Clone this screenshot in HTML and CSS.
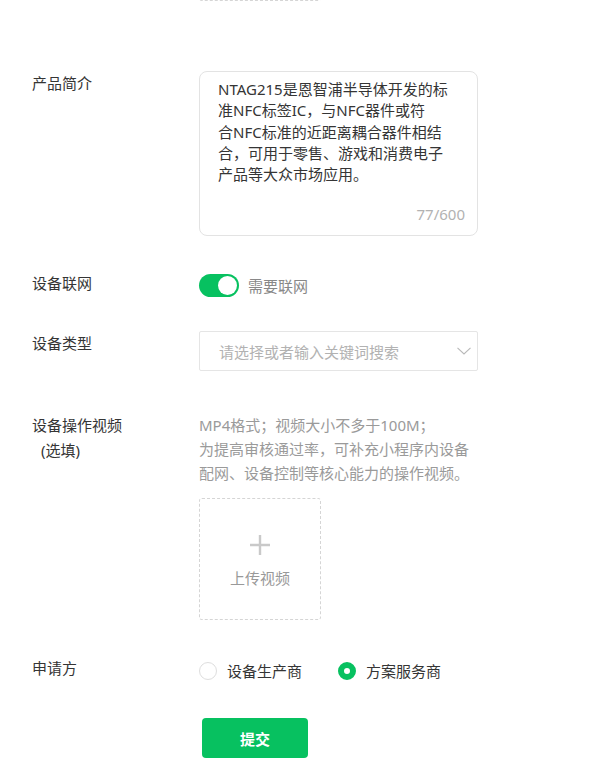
FILE: index.html
```html
<!DOCTYPE html>
<html lang="zh-CN">
<head>
<meta charset="utf-8">
<link rel="stylesheet" href="styles.css">
</head>
<body>
<div class="form">
  <div class="row row-prev">
    <div class="label"></div>
    <div class="content"><div class="upload upload-prev"></div></div>
  </div>

  <div class="row row-intro">
    <div class="label">产品简介</div>
    <div class="content">
      <div class="textarea">
        <div class="ta-text">NTAG215是恩智浦半导体开发的标<br>准NFC标签IC，与NFC器件或符<br>合NFC标准的近距离耦合器件相结<br>合，可用于零售、游戏和消费电子<br>产品等大众市场应用。</div>
        <div class="counter">77/600</div>
      </div>
    </div>
  </div>

  <div class="row row-net">
    <div class="label">设备联网</div>
    <div class="content switch-line">
      <span class="switch"><span class="knob"></span></span>
      <span class="switch-text">需要联网</span>
    </div>
  </div>

  <div class="row row-type">
    <div class="label">设备类型</div>
    <div class="content">
      <div class="select">
        <span class="placeholder">请选择或者输入关键词搜索</span>
        <svg class="chevron" width="14" height="8" viewBox="0 0 14 8"><path d="M0.5 0.8 L7 7 L13.5 0.8" fill="none" stroke="#b8b8b8" stroke-width="1.1"/></svg>
      </div>
    </div>
  </div>

  <div class="row row-video">
    <div class="label label-video">设备操作视频<br><span class="optional">(选填)</span></div>
    <div class="content">
      <div class="help">MP4格式；视频大小不多于100M；<br>为提高审核通过率，可补充小程序内设备<br>配网、设备控制等核心能力的操作视频。</div>
      <div class="upload">
        <svg class="plus" width="22" height="22" viewBox="0 0 22 22"><path d="M11 1 V21 M1 11 H21" stroke="#c9c9c9" stroke-width="2.4" fill="none"/></svg>
        <span class="upload-text">上传视频</span>
      </div>
    </div>
  </div>

  <div class="row row-applicant">
    <div class="label">申请方</div>
    <div class="content radios">
      <span class="radio-item"><span class="radio"></span><span class="radio-text">设备生产商</span></span>
      <span class="radio-item"><span class="radio checked"></span><span class="radio-text">方案服务商</span></span>
    </div>
  </div>

  <div class="row row-submit">
    <button class="submit">提交</button>
  </div>
</div>
</body>
</html>
```

FILE: styles.css
```css
html, body {
  margin: 0;
  padding: 0;
  background: #ffffff;
  overflow: hidden;
}

body {
  font-family: "Noto Sans", "Noto Sans CJK SC", sans-serif;
  font-size: 15px;
  color: #353535;
}

.form {
  padding-left: 32px;
}

.row {
  display: flex;
  align-items: flex-start;
}

.label {
  width: 167px;
  flex: none;
  line-height: 24px;
  color: #353535;
}

.label-video {
  line-height: 25px;
}

.optional {
  display: inline-block;
  padding-left: 9px;
}

.content {
  width: 279px;
}

.row-prev {
  margin-top: -121px;
}

.row-intro {
  margin-top: 70px;
}

.textarea {
  box-sizing: border-box;
  width: 279px;
  height: 165px;
  border: 1px solid #e3e3e3;
  border-radius: 8px;
  padding: 7px 12px 0 18px;
  display: flex;
  flex-direction: column;
}

.ta-text {
  line-height: 21.3px;
  color: #353535;
  white-space: nowrap;
  flex: 1;
}

.counter {
  align-self: flex-end;
  color: #b2b2b2;
  line-height: 22px;
  margin-bottom: 10px;
}

.row-net {
  margin-top: 35px;
}

.switch-line {
  display: flex;
  align-items: center;
  height: 28px;
}

.switch {
  box-sizing: border-box;
  width: 40px;
  height: 23px;
  border-radius: 12px;
  background: #07c160;
  display: flex;
  align-items: center;
  justify-content: flex-end;
  padding-right: 2px;
}

.knob {
  width: 19px;
  height: 19px;
  border-radius: 50%;
  background: #ffffff;
}

.switch-text {
  margin-left: 9px;
  color: #888888;
}

.row-type {
  margin-top: 32px;
}

.select {
  box-sizing: border-box;
  width: 279px;
  height: 40px;
  border: 1px solid #e5e5e5;
  border-radius: 2px;
  display: flex;
  align-items: center;
  justify-content: space-between;
  padding: 0 6px 0 19px;
}

.placeholder {
  color: #b2b2b2;
}

.chevron {
  display: block;
}

.row-video {
  margin-top: 42px;
}

.help {
  line-height: 24px;
  color: #9a9a9a;
  white-space: nowrap;
}

.upload {
  box-sizing: border-box;
  width: 122px;
  height: 122px;
  border: 1px dashed #d5d5d5;
  border-radius: 3px;
  display: flex;
  flex-direction: column;
  align-items: center;
  justify-content: flex-start;
  padding-top: 35px;
}

.row-video .upload {
  margin-top: 13px;
}

.plus {
  display: block;
}

.upload-text {
  margin-top: 10px;
  line-height: 24px;
  color: #999999;
}

.row-applicant {
  margin-top: 36px;
}

.radios {
  display: flex;
  align-items: center;
  height: 24px;
  padding-top: 3px;
}

.radio-item {
  display: flex;
  align-items: center;
  margin-right: 36px;
}

.radio {
  box-sizing: border-box;
  width: 18px;
  height: 18px;
  border-radius: 50%;
  border: 1px solid #dedede;
  background: #ffffff;
}

.radio.checked {
  border: 6px solid #07c160;
  background: #ffffff;
}

.radio-text {
  margin-left: 10px;
  line-height: 24px;
  color: #353535;
}

.row-submit {
  margin-top: 35px;
  padding-left: 170px;
}

.submit {
  width: 106px;
  height: 40px;
  border: none;
  border-radius: 4px;
  background: #07c160;
  color: #ffffff;
  font-family: "Noto Sans", "Noto Sans CJK SC", sans-serif;
  font-size: 15px;
  font-weight: 600;
  cursor: pointer;
}
```
